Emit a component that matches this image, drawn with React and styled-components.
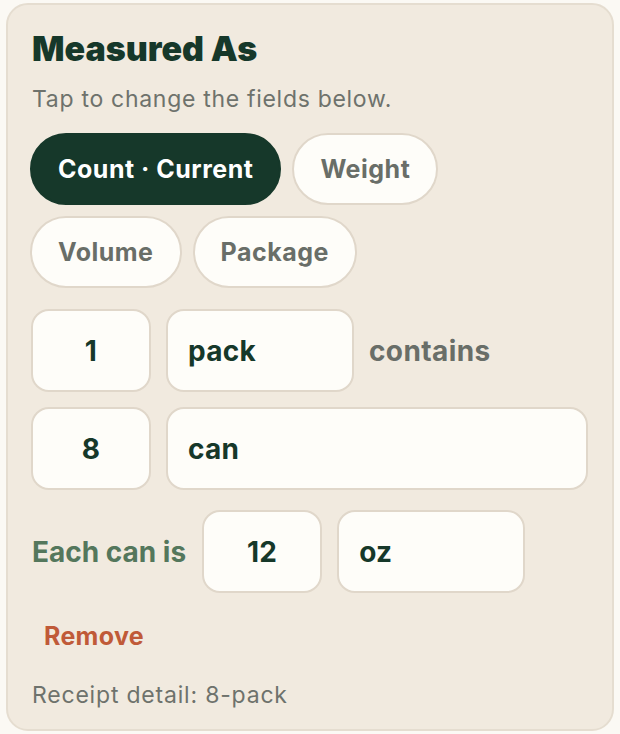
import React from "react";
import styled, { createGlobalStyle } from "styled-components";

const GlobalStyle = createGlobalStyle`
  html, body {
    margin: 0;
    padding: 0;
    background: #fbf9f4;
  }
  body {
    font-family: "Inter", "Noto Sans", sans-serif;
  }
`;

const Page = styled.div`
  padding: 3px 6px 3px 6px;
`;

const Card = styled.section`
  box-sizing: border-box;
  width: 608px;
  height: 728px;
  background: #f1eadf;
  border: 2px solid #e5ddd0;
  border-radius: 22px;
  padding: 25px 24px 24px 24px;
  display: flex;
  flex-direction: column;
`;

const Title = styled.h2`
  margin: 0;
  font-size: 34px;
  line-height: 38px;
  font-weight: 900;
  color: #16382a;
`;

const Hint = styled.p`
  margin: 17px 0 0 0;
  font-size: 23px;
  line-height: 28px;
  letter-spacing: 0.7px;
  color: #6e726c;
`;

const Chips = styled.div`
  display: flex;
  flex-wrap: wrap;
  gap: 11px 11px;
  margin-top: 20px;
  margin-left: -2px;
  max-width: 420px;
`;

const Chip = styled.button`
  box-sizing: border-box;
  height: 72px;
  padding: 0 26px;
  border-radius: 36px;
  border: 2px solid ${(p) => (p.active ? "#16382a" : "#e0d7ca")};
  background: ${(p) => (p.active ? "#16382a" : "#fefdf9")};
  color: ${(p) => (p.active ? "#ffffff" : "#696e68")};
  font-family: inherit;
  font-size: 25px;
  font-weight: 700;
  letter-spacing: 0.5px;
  cursor: pointer;
`;

const Fields = styled.div`
  display: flex;
  flex-direction: column;
  gap: 15px;
  margin-top: 21px;
  margin-left: -1px;
`;

const Row = styled.div`
  display: flex;
  align-items: center;
  gap: 15px;
`;

const Field = styled.div`
  box-sizing: border-box;
  height: 83px;
  width: ${(p) => p.w || "120px"};
  flex: ${(p) => (p.grow ? "1" : "none")};
  display: flex;
  align-items: center;
  justify-content: ${(p) => (p.center ? "center" : "flex-start")};
  padding: 0 20px;
  background: #fefdf9;
  border: 2px solid #e0d7ca;
  border-radius: 18px;
  color: #16382a;
  font-size: 28px;
  font-weight: 700;
  letter-spacing: 0.3px;
`;

const Word = styled.span`
  font-size: 28px;
  font-weight: 700;
  letter-spacing: 0.4px;
  color: #696e68;
  white-space: nowrap;
`;

const Lead = styled(Word)`
  color: #54775c;
  letter-spacing: 0px;
  margin-right: 1px;
`;

const EachRow = styled(Row)`
  margin-top: 20px;
`;

const RemoveButton = styled.button`
  align-self: flex-start;
  margin-top: 20px;
  padding: 8px 12px;
  border: none;
  background: none;
  font-family: inherit;
  font-size: 25px;
  font-weight: 700;
  letter-spacing: 0.3px;
  color: #c05a38;
  cursor: pointer;
`;

const Note = styled.p`
  margin: 22px 0 0 0;
  font-size: 23px;
  line-height: 28px;
  letter-spacing: 0.8px;
  color: #6e726c;
`;

const modes = ["Count · Current", "Weight", "Volume", "Package"];

export default function App() {
  return (
    <>
      <GlobalStyle />
      <Page>
        <Card>
          <Title>Measured As</Title>
          <Hint>Tap to change the fields below.</Hint>
          <Chips>
            {modes.map((m, i) => (
              <Chip key={m} active={i === 0}>
                {m}
              </Chip>
            ))}
          </Chips>
          <Fields>
            <Row>
              <Field center>1</Field>
              <Field w="188px">pack</Field>
              <Word>contains</Word>
            </Row>
            <Row>
              <Field center>8</Field>
              <Field grow>can</Field>
            </Row>
          </Fields>
          <EachRow>
            <Lead>Each can is</Lead>
            <Field center>12</Field>
            <Field w="188px">oz</Field>
          </EachRow>
          <RemoveButton>Remove</RemoveButton>
          <Note>Receipt detail: 8-pack</Note>
        </Card>
      </Page>
    </>
  );
}
